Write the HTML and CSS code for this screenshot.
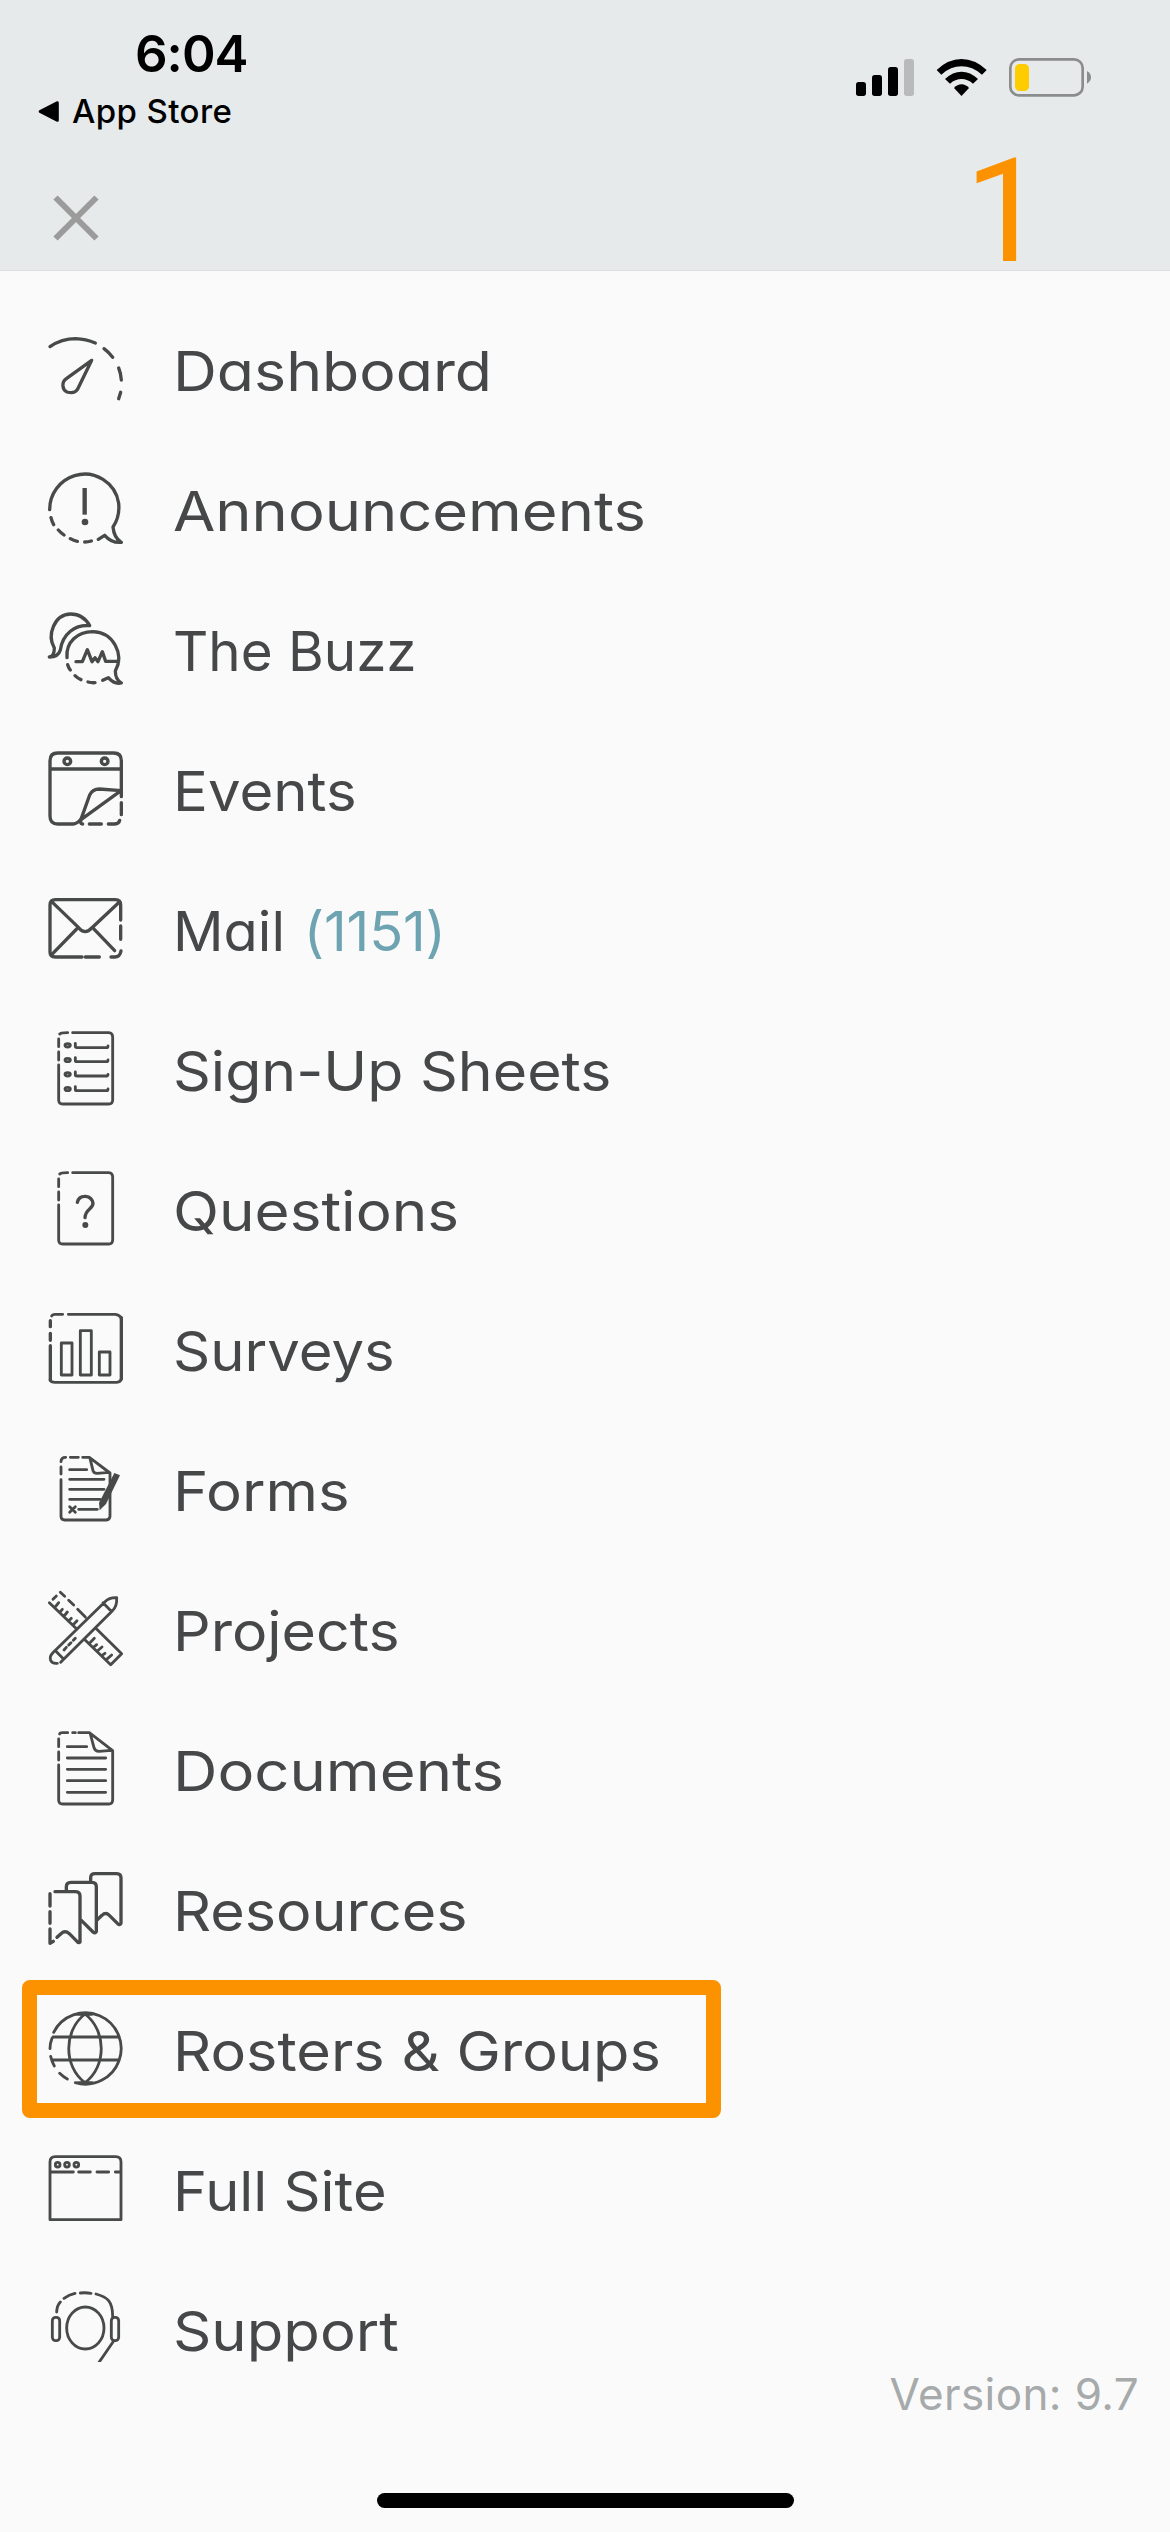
FILE: index.html
```html
<!DOCTYPE html>
<html lang="en">
<head>
<meta charset="utf-8">
<title>Menu</title>
<link rel="stylesheet" href="styles.css">
</head>
<body>
<header class="header">
  <div class="status">
    <div class="status-left">
      <div class="time">6:04</div>
      <div class="back"><svg class="back-arrow" viewBox="0 0 22 21"><path d="M19.5 1.5v18L2 10.5z" fill="#000" stroke="#000" stroke-width="2.6" stroke-linejoin="round"/></svg><span>App Store</span></div>
    </div>
    <svg class="status-icons" viewBox="168 174 705 117">
      <rect x="168" y="246" width="30" height="42" rx="8"/>
      <rect x="216" y="225" width="30" height="63" rx="8"/>
      <rect x="264" y="201" width="30" height="87" rx="8"/>
      <rect x="312" y="177" width="30" height="111" rx="8" fill="#b8bbba"/>
      <path d="M410 210Q444 177 484.500 177T560 210L546 224Q517 199 484.500 199T424 224Z"/>
      <path d="M435 237Q458 215 484.500 215T534 237L519 251Q503 237 484.500 237T450 251Z"/>
      <path d="M462 264Q472 253 484.500 253T507 264L484.500 288Z"/>
      <rect x="631" y="178" width="217" height="108" rx="26" fill="none" stroke="#8a8d8c" stroke-width="8"/>
      <rect x="645" y="192" width="42" height="81" rx="14" fill="#ffcc00"/>
      <path d="M861 213Q873 220 873 232T861 251Z" fill="#8a8d8c"/>
    </svg>
  </div>
  <div class="toolbar">
    <svg class="close" viewBox="0 0 46 46"><path d="M2.500 2.500l41 41M43.500 2.500l-41 41"/></svg>
    <span class="step">1</span>
  </div>
</header>
<nav class="menu">
  <a class="item"><svg class="icon" viewBox="84 63 225 225"><path d="M90 110Q125 86 167 86Q198 87 226 99M252 116Q267 127 278 142M296 174Q303 191 304 210M302 247L296 266M215 151L139 206C123 217 127 240 141 246C157 250 166 248 172 239Z"/></svg><span class="label dashboard">Dashboard</span></a>
  <a class="item"><svg class="icon" viewBox="84 483 225 225"><path d="M89 599A106 106 0 0 1 164 497A103 103 0 0 1 296 580Q300 620 279 651Q282 684 304 697Q275 700 254 676L235 688M93 623Q96 635 101 644M115 660Q122 668 132 675M151 686Q161 692 172 694M194 696Q205 696 214 693"/><path class="heavy" d="M194 534V614"/><circle class="solid" cx="195" cy="636" r="10"/></svg><span class="label announcements">Announcements</span></a>
  <a class="item"><svg class="icon" viewBox="84 63 225 225"><path d="M88 201Q103 200 103 174C80 135 103 73 152 72Q190 72 209 107C165 103 128 132 121 180Q115 201 88 201M141 203C137 155 173 126 218 125C280 127 314 192 286 243Q286 269 304 279Q283 284 265 263L248 271M143 224Q146 234 151 240M165 257Q173 265 183 269M204 276Q215 279 225 278M168 215H187L202 179L216 215L225 203L234 215L247 185L257 214H296"/></svg><span class="label buzz">The Buzz</span></a>
  <a class="item"><svg class="icon" viewBox="84 483 225 225"><path d="M304 620V512Q304 489 281 489H113Q90 489 90 512V678Q90 702 113 702H160Q173 701 184 685L209 615Q218 597 238 597L303 602L184 688Q178 702 188 702M90 537H304M304 638V674M299 691Q297 701 284 702H265M244 702H208"/><circle cx="142" cy="514" r="10"/><circle cx="254" cy="514" r="10"/></svg><span class="label events">Events</span></a>
  <a class="item"><svg class="icon" viewBox="84 63 225 225"><path d="M302 150V105Q302 89 286 89H106Q90 89 90 105V246Q90 261 106 261H186M196 261H238M302 168V208M303 243Q300 261 284 261H273M95 95L176 173Q195 197 216 173L299 95M170 177L95 254M220 175L284 242"/></svg><span class="label mail">Mail <span class="count">(1151)</span></span></a>
  <a class="item"><svg class="icon thin" viewBox="84 483 225 225"><path d="M158 488H266Q278 489 278 501V690Q278 702 266 702H128Q116 702 116 690V585M119 492Q121 488 143 488M116 507V530M116 546V570M166 520V529Q166 533 171 533H260Q264 533 264 528M166 563V572Q166 575 171 575H260Q264 575 264 570M166 606V615Q166 618 171 618H260Q264 618 264 613M166 650V659Q166 662 171 662H260Q264 662 264 657"/><ellipse cx="143" cy="526" rx="8" ry="5"/><ellipse cx="143" cy="570" rx="8" ry="5"/><ellipse cx="143" cy="613" rx="8" ry="5"/><ellipse cx="143" cy="657" rx="8" ry="5"/></svg><span class="label signup">Sign-Up Sheets</span></a>
  <a class="item"><svg class="icon" viewBox="84 63 225 225"><path class="fine" d="M158 68H266Q278 69 278 81V270Q278 282 266 282H128Q116 282 116 270V165M119 72Q121 68 143 68M116 87V110M116 126V150"/><path d="M172 157Q176 138 197 139Q216 141 219 160C219 178 196 177 195 203"/><circle class="solid" cx="196" cy="225" r="9"/></svg><span class="label questions">Questions</span></a>
  <a class="item"><svg class="icon" viewBox="84 483 225 225"><path class="fine" d="M145 493H286Q299 494 304 505M128 493H105Q97 493 95 498M90 690Q93 697 105 697H290Q302 696 304 686"/><path d="M304 503V687M91 512V530M91 550V571M91 587V690"/><path class="fine" d="M124 579H156V675H124ZM181 542H214V675H181ZM238 606H270V675H238Z"/></svg><span class="label surveys">Surveys</span></a>
  <a class="item"><svg class="icon thin" viewBox="84 63 225 225"><path d="M123 149V260Q124 270 134 270H259Q270 269 270 258V129L208 82H188M175 82H151M137 82Q123 82 123 95M123 111V132M210 85L219 122Q222 130 231 130L268 127M149 119H200M149 148H252M149 178H252M149 208H240M176 238H232M149 230L166 247M166 230L149 247"/><path class="solid" d="M283 129L300 136L258 222L239 241L237 218Z"/></svg><span class="label forms">Forms</span></a>
  <a class="item"><svg class="icon thin" viewBox="84 483 225 225"><path d="M122 697L276 544Q292 529 290 503Q268 502 255 515L100 667C83 684 91 702 112 700M249 518L273 543M107 663L127 683M88 518L171 598M121 487L134 499M146 511L161 525M173 538L196 561M99 508L109 498M104 533L116 518M119 547L127 538M131 560L142 546M145 573L154 565M158 586L171 572M226 593L305 671L272 704L193 628M207 641L223 625M220 652L230 644M232 663L246 651M245 677L255 670M259 689L275 675M132 660L139 652M146 645L153 638M160 631L166 625"/></svg><span class="label projects">Projects</span></a>
  <a class="item"><svg class="icon thin" viewBox="84 63 225 225"><path d="M116 165V270Q116 282 128 282H266Q278 282 278 270V122L208 68H176M166 68H158M143 68H128Q120 68 119 72M116 87V110M116 126V150M211 72L222 113Q225 124 237 124L274 121M142 110H200M142 144H257M142 178H257M142 212H257M142 247H257"/></svg><span class="label documents">Documents</span></a>
  <a class="item"><svg class="icon" viewBox="84 483 225 225"><path d="M105 545H167Q180 546 180 558V696Q176 700 171 694L148 671Q135 660 123 671L111 682M90 551V588M90 605V640M90 657V700L100 694M139 541V530Q139 517 153 517H216Q229 517 229 530V665Q226 672 219 666L184 631M212 513V503Q212 491 225 491H290Q303 491 303 504V640Q300 647 293 641L268 616Q257 605 246 616L231 630"/></svg><span class="label resources">Resources</span></a>
  <a class="item highlight"><svg class="icon thin" viewBox="114 123 225 225"><path d="M131 187A107 107 0 1 1 196 338M126 205Q120 219 120 236M122 259Q126 276 133 288M149 310Q160 321 172 327M129 201H328M125 270H328M225 132C160 182 160 290 225 338C290 290 290 182 225 132M205 133H246M205 338H246"/></svg><span class="label rosters">Rosters &amp; Groups</span></a>
  <a class="item"><svg class="icon thin" viewBox="114 543 225 225"><path d="M120 749V576Q120 560 136 560H317Q333 560 333 576V749ZM122 606H190M206 606H241M261 606H296M316 606H331"/><circle cx="143" cy="584" r="7"/><circle cx="171" cy="584" r="7"/><circle cx="199" cy="584" r="7"/></svg><span class="label site">Full Site</span></a>
  <a class="item"><svg class="icon thin" viewBox="84 63 225 225"><rect x="97" y="142" width="22" height="70" rx="10"/><rect x="274" y="142" width="22" height="70" rx="10"/><ellipse cx="196" cy="174" rx="56" ry="63"/><path d="M110 126Q111 106 121 96M132 85Q147 74 165 70M181 69Q197 67 213 70M228 72C262 81 278 93 278 140M281 213L235 280"/></svg><span class="label support">Support</span></a>
</nav>
<footer class="footer">
  <div class="version">Version: 9.7</div>
  <div class="home-bar"></div>
</footer>
</body>
</html>
```
FILE: styles.css
```css
*, *::after { box-sizing: border-box; }
body {
  margin: 0;
  width: 1170px;
  height: 2532px;
  background: #fafafa;
  color: #464749;
  font-family: Inter, "Liberation Sans", sans-serif;
  display: flex;
  flex-direction: column;
  overflow: hidden;
}
.header {
  height: 271px;
  background: #e6eaea;
  border-bottom: 1px solid #dcdfe0;
  display: flex;
  flex-direction: column;
}
.status {
  height: 148px;
  display: flex;
  justify-content: space-between;
  color: #000;
  padding: 24px 79px 0 38px;
}
.status-left { display: flex; flex-direction: column; }
.time {
  font-size: 51px;
  line-height: 60px;
  font-weight: 600;
  letter-spacing: -1px;
  padding-left: 97px;
}
.back {
  display: flex;
  align-items: center;
  gap: 12px;
  font-size: 33px;
  line-height: 40px;
  font-weight: 500;
  letter-spacing: 0.4px;
  margin-top: 7px;
}
.back-arrow { width: 22px; height: 21px; }
.status-icons { width: 235px; height: 39px; margin-top: 34px; }
.toolbar {
  height: 122px;
  display: flex;
  justify-content: space-between;
  align-items: flex-start;
  padding: 0 124px 0 53px;
}
.close { width: 46px; height: 46px; margin-top: 47px; }
.close path { fill: none; stroke: #9b9b9b; stroke-width: 6; }
.step { font: 400 145px/126px Roboto, sans-serif; color: #fc9200; }
.menu {
  height: 2091px;
  padding-top: 27px;
  overflow: hidden;
  display: flex;
  flex-direction: column;
}
.item {
  flex: none;
  height: 140px;
  padding: 0 48px;
  display: flex;
  align-items: center;
  gap: 50px;
  position: relative;
}
.icon {
  flex: none;
  width: 75px;
  height: 75px;
  overflow: visible;
  fill: none;
  stroke: #484949;
  stroke-width: 10;
  stroke-linecap: round;
  stroke-linejoin: round;
}
.thin, .fine { stroke-width: 8.5; }
.heavy { stroke-width: 13; stroke-linecap: butt; }
.solid { fill: #484949; stroke: none; }
.label {
  font-size: 55px;
  line-height: 80px;
  white-space: nowrap;
  font-feature-settings: "cv11" 1;
  padding-top: 5px;
  transform-origin: left center;
}
.dashboard { transform: scaleX(1.105); }
.announcements { transform: scaleX(1.116); }
.buzz { transform: scaleX(0.995); }
.events { transform: scaleX(1.056); }
.mail { transform: scaleX(1.018); }
.signup { transform: scaleX(1.073); }
.questions { transform: scaleX(1.094); }
.surveys { transform: scaleX(1.055); }
.forms { transform: scaleX(1.09); }
.projects { transform: scaleX(1.073); }
.documents { transform: scaleX(1.119); }
.resources { transform: scaleX(1.077); }
.rosters { transform: scaleX(1.081); }
.site { transform: scaleX(1.05); }
.support { transform: scaleX(1.087); }
.count { color: #6ea3b2; margin-left: 3px; letter-spacing: -0.2px; }
.highlight::after {
  content: "";
  position: absolute;
  left: 22px;
  top: 2px;
  width: 699px;
  height: 138px;
  border: 15px solid #fc9200;
  border-radius: 8px;
}
.footer { flex: 1; display: flex; flex-direction: column; }
.version {
  align-self: flex-end;
  margin-right: 31px;
  padding-top: 2px;
  font-size: 44px;
  line-height: 60px;
  letter-spacing: 0.4px;
  color: #a6aaaa;
}
.home-bar {
  align-self: center;
  width: 417px;
  height: 15px;
  margin-top: 69px;
  border-radius: 8px;
  background: #000;
}
```
